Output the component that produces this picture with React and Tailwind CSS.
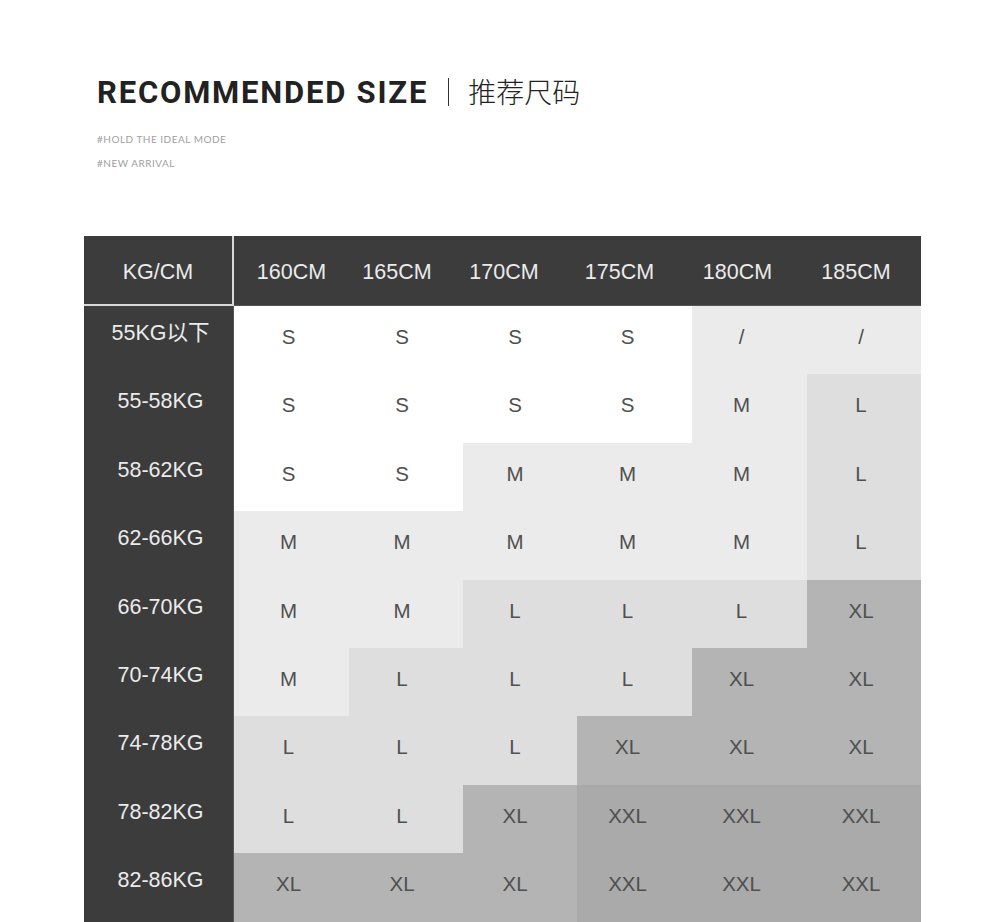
import React from "react";

const W = "bg-white";
const E = "bg-[#ebebeb]";
const D = "bg-[#dedede]";
const B = "bg-[#b4b4b4]";
const A = "bg-[#aaaaaa]";

const rows = [
  ["55KG以下", [["S", W], ["S", W], ["S", W], ["S", W], ["/", E], ["/", E]]],
  ["55-58KG", [["S", W], ["S", W], ["S", W], ["S", W], ["M", E], ["L", D]]],
  ["58-62KG", [["S", W], ["S", W], ["M", E], ["M", E], ["M", E], ["L", D]]],
  ["62-66KG", [["M", E], ["M", E], ["M", E], ["M", E], ["M", E], ["L", D]]],
  ["66-70KG", [["M", E], ["M", E], ["L", D], ["L", D], ["L", D], ["XL", B]]],
  ["70-74KG", [["M", E], ["L", D], ["L", D], ["L", D], ["XL", B], ["XL", B]]],
  ["74-78KG", [["L", D], ["L", D], ["L", D], ["XL", B], ["XL", B], ["XL", B]]],
  ["78-82KG", [["L", D], ["L", D], ["XL", B], ["XXL", A], ["XXL", A], ["XXL", A]]],
  ["82-86KG", [["XL", B], ["XL", B], ["XL", B], ["XXL", A], ["XXL", A], ["XXL", A]]],
];

const heights = ["160CM", "165CM", "170CM", "175CM", "180CM", "185CM"];
const headPad = ["pr-[0px]", "pr-[18px]", "pr-[32px]", "pr-[30px]", "pr-[24px]", "pr-[16px]"];
const cellPad = ["pr-[6px]", "pr-[8px]", "pr-[10px]", "pr-[14px]", "pr-[16px]", "pr-[6px]"];

export default function App() {
  return (
    <div className="w-[1000px] h-[922px] bg-white overflow-hidden" style={{ fontFamily: '"Liberation Sans", "Noto Sans CJK SC", sans-serif' }}>
      <div className="pl-[97px] pt-[75px]">
        <div className="flex items-center h-[34px]">
          <span className="font-['Roboto',sans-serif] font-bold text-[31px] leading-none tracking-[1.8px] text-[#222]">RECOMMENDED SIZE</span>
          <span className="ml-[20px] w-px h-[28px] bg-[#333]"></span>
          <span className="ml-[19px] -mt-[2px] font-['Noto_Sans_CJK_SC',sans-serif] font-light text-[28px] leading-none text-[#222]">推荐尺码</span>
        </div>
        <div className="mt-[25px] text-[10px] leading-none tracking-[0.5px] text-[#a0a0a0] font-['Lato',sans-serif]">#HOLD THE IDEAL MODE</div>
        <div className="mt-[14px] text-[10px] leading-none tracking-[0.5px] text-[#a0a0a0] font-['Lato',sans-serif]">#NEW ARRIVAL</div>
      </div>

      <div className="ml-[84px] mt-[68px] w-[837px] grid grid-cols-[150px_115px_114px_114px_115px_115px_114px]">
        <div className="h-[70px] bg-[#3c3c3c] border-r-2 border-b-2 border-[#d8d8d8] flex items-center justify-center text-[21.5px] text-[#ebebeb] pt-[5px]">KG/CM</div>
        {heights.map((h, i) => (
          <div key={h} className={`h-[70px] bg-[#3c3c3c] flex items-center justify-center text-[21.5px] text-[#ebebeb] border-b border-[#555] pt-[3px] ${headPad[i]}`}>
            {h}
          </div>
        ))}
        {rows.map(([label, cells]) => (
          <React.Fragment key={label}>
            <div className="h-[68.4px] bg-[#3c3c3c] border-r border-[#555] flex items-start justify-center pt-[11px] pl-[4px] text-[21.5px] text-[#ebebeb]">{label}</div>
            {cells.map(([s, c], i) => (
              <div key={i} className={`h-[68.4px] ${c} flex items-start justify-center pt-[16px] text-[20.5px] text-[#505050] ${cellPad[i]}`}>{s}</div>
            ))}
          </React.Fragment>
        ))}
      </div>
    </div>
  );
}
